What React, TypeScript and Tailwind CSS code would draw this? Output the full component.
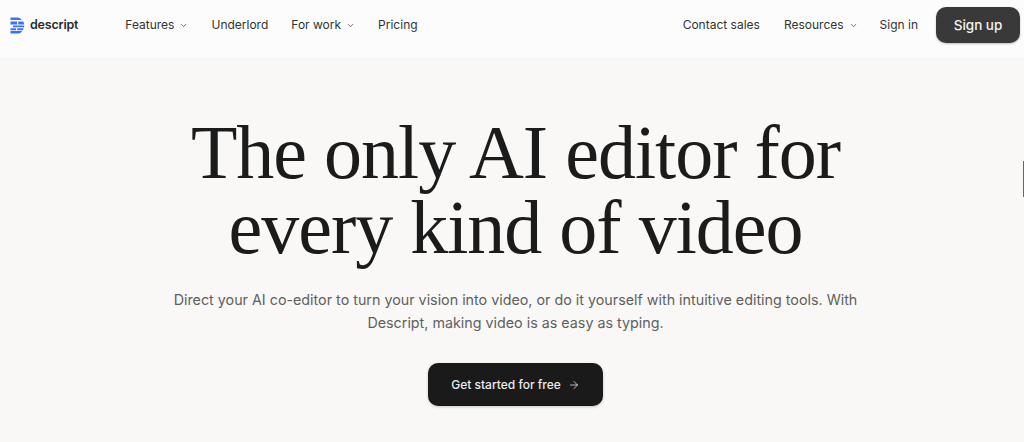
import React from 'react';
import { ChevronDown, ArrowRight } from 'lucide-react';

function Logo() {
  return (
    <svg width="15" height="17" viewBox="0 0 15 17" className="shrink-0">
      <path d="M0.5 0.4H7.5C9.3 0.4 10.8 1.3 11.8 3H0.5Z" fill="#3b72f6" />
      <path d="M0.5 4.6H7V7.4H0.5Z M8.2 4.6H13.3C13.7 5.4 14 6.4 14.1 7.4H8.2Z" fill="#3b72f6" />
      <path d="M3 8.4H14.2C14.2 9 14.1 9.6 14 10.2H3Z" fill="#3b72f6" />
      <path d="M0.5 11.2H6V13.2H0.5Z M7.2 11.2H13.7C13.5 11.9 13.2 12.6 12.9 13.2H7.2Z" fill="#3b72f6" />
      <path d="M0.5 14H12.3C11.2 15.7 9.6 16.6 7.5 16.6H0.5Z" fill="#3b72f6" />
    </svg>
  );
}

function NavItem({ label, menu }: { label: string; menu?: boolean }) {
  return (
    <a className="flex items-center gap-[5px] text-[12px] leading-5 text-[#333333] whitespace-nowrap">
      {label}
      {menu && <ChevronDown size={9} strokeWidth={2} className="text-[#444444] mt-[1px]" />}
    </a>
  );
}

export default function App() {
  return (
    <div className="relative h-[442px] overflow-hidden bg-[#f9f8f6] font-['Inter',sans-serif]">
      <header className="flex h-[57px] items-center bg-[#fcfcfc] pb-[7px] pl-[10px] pr-[4px]">
        <div className="flex items-center gap-[5px]">
          <Logo />
          <span className="text-[12.5px] font-semibold leading-5 tracking-[-0.2px] text-[#2a2a2a]">descript</span>
        </div>
        <nav className="ml-[47px] flex items-center gap-[23px]">
          <NavItem label="Features" menu />
          <NavItem label="Underlord" />
          <NavItem label="For work" menu />
          <NavItem label="Pricing" />
        </nav>
        <div className="ml-auto flex items-center">
          <NavItem label="Contact sales" />
          <div className="ml-[24px]">
            <NavItem label="Resources" menu />
          </div>
          <div className="ml-[22px]">
            <NavItem label="Sign in" />
          </div>
          <button className="ml-[18px] h-[36px] w-[84px] rounded-[10px] bg-[#393939] text-[13.5px] font-medium text-[#f4f4f4] shadow-[0_1px_2px_rgba(0,0,0,0.25)]">
            Sign up
          </button>
        </div>
      </header>

      <main className="flex flex-col items-center pl-[7px]">
        <h1 className="mt-[58px] text-center font-['Liberation_Serif',serif] text-[76px] font-normal leading-[75px] tracking-[-1px] text-[#1b1b1b]">
          The only AI editor for
          <br />
          every kind of video
        </h1>
        <p className="mt-[23px] w-[700px] text-center text-[14.3px] leading-[23px] text-[#5f5f5f]">
          Direct your AI co-editor to turn your vision into video, or do it yourself with intuitive editing tools. With
          Descript, making video is as easy as typing.
        </p>
        <button className="mt-[29px] flex h-[43px] w-[175px] items-center justify-center gap-[7px] rounded-[10px] bg-[#1a1a1a] text-[12px] font-medium text-[#ececec] shadow-[0_1px_3px_rgba(0,0,0,0.2)]">
          Get started for free
          <ArrowRight size={12} strokeWidth={1.5} />
        </button>
      </main>

      {/* sliver of a tab peeking in from the right edge */}
      <div className="absolute right-0 top-[161px] h-[36px] w-[1px] bg-[#666666]" />
    </div>
  );
}
